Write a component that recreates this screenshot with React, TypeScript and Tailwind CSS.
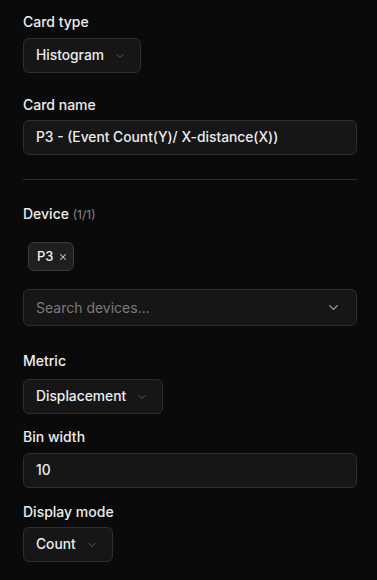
import React from 'react';
import { ChevronDown, X } from 'lucide-react';

const Label: React.FC<{ children: React.ReactNode; className?: string }> = ({ children, className = '' }) => (
  <div className={`text-[14px] leading-5 font-medium text-[#ededed] ${className}`}>{children}</div>
);

const Select: React.FC<{ value: string }> = ({ value }) => (
  <button className="flex items-center gap-[10px] h-[35px] pl-[12px] pr-[14px] rounded-md border border-[#2e2e2e] bg-[#161616] text-[13.8px] font-medium text-[#ededed]">
    <span>{value}</span>
    <ChevronDown className="w-[12px] h-[12px] text-[#5a5a5a]" strokeWidth={2} />
  </button>
);

const Input: React.FC<{ value: string }> = ({ value }) => (
  <div className="flex items-center h-[35px] px-[12px] rounded-md border border-[#2e2e2e] bg-[#161616] text-[13.8px] font-medium text-[#ededed]">
    {value}
  </div>
);

export default function App() {
  return (
    <div className="min-h-[580px] w-[377px] bg-[#0a0a0a] pl-[23px] pr-[20px] pt-3 pb-4" style={{ fontFamily: 'Inter, "Noto Sans", sans-serif' }}>
      {/* Card type */}
      <Label>Card type</Label>
      <div className="mt-[6px] flex">
        <Select value="Histogram" />
      </div>

      {/* Card name */}
      <Label className="mt-[22px]">Card name</Label>
      <div className="mt-[5px]">
        <Input value="P3 - (Event Count(Y)/ X-distance(X))" />
      </div>

      <div className="mt-[24px] h-px bg-[#2a2a2a]" />

      {/* Device */}
      <Label className="mt-[24px]">
        Device <span className="text-[12px] font-normal text-[#8a8a8a]">(1/1)</span>
      </Label>
      <div className="mt-[17px] pl-[5px] flex">
        <div className="flex items-center gap-[4px] h-[29px] pl-[8px] pr-[5px] rounded-md border border-[#3a3a3a] bg-[#1f1f1f] text-[13px] font-medium text-[#f0f0f0]">
          <span>P3</span>
          <X className="w-[10px] h-[10px] text-[#d0d0d0]" strokeWidth={2.5} />
        </div>
      </div>
      <div className="mt-[18px] flex items-center justify-between h-[37px] pl-[12px] pr-[15px] rounded-md border border-[#2e2e2e] bg-[#161616]">
        <span className="text-[14px] text-[#7a7a7a]">Search devices...</span>
        <ChevronDown className="w-[15px] h-[15px] text-[#a0a0a0]" strokeWidth={2} />
      </div>

      {/* Metric */}
      <Label className="mt-[25px]">Metric</Label>
      <div className="mt-[8px] flex">
        <Select value="Displacement" />
      </div>

      {/* Bin width */}
      <Label className="mt-[13px]">Bin width</Label>
      <div className="mt-[6px]">
        <Input value="10" />
      </div>

      {/* Display mode */}
      <Label className="mt-[14px]">Display mode</Label>
      <div className="mt-[5px] flex">
        <Select value="Count" />
      </div>
    </div>
  );
}
